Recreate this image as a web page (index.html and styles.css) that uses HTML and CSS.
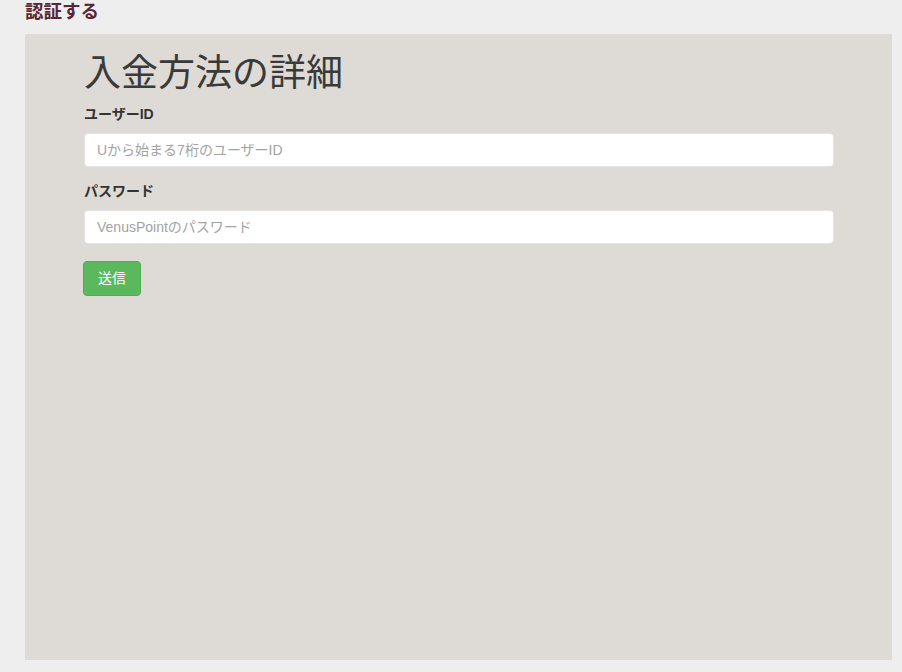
FILE: index.html
```html
<!DOCTYPE html>
<html lang="ja">
<head>
<meta charset="utf-8">
<title>認証する</title>
<link rel="stylesheet" href="styles.css">
</head>
<body>
<div class="page">
  <h2 class="page-title">認証する</h2>
  <div class="panel">
    <h1 class="heading">入金方法の詳細</h1>
    <form class="form">
      <div class="form-group">
        <label class="label" for="uid">ユーザーID</label>
        <input class="input" id="uid" type="text" placeholder="Uから始まる7桁のユーザーID">
      </div>
      <div class="form-group">
        <label class="label" for="pw">パスワード</label>
        <input class="input" id="pw" type="password" placeholder="VenusPointのパスワード">
      </div>
      <button class="btn" type="button">送信</button>
    </form>
  </div>
</div>
</body>
</html>
```

FILE: styles.css
```css
html, body {
  margin: 0;
  padding: 0;
  background: #eeeeee;
  font-family: "Liberation Sans", "Noto Sans CJK JP", sans-serif;
  color: #333333;
}

.page {
  padding: 0 10px 0 25px;
}

.page-title {
  margin: 0;
  font-size: 18.5px;
  line-height: 23px;
  font-weight: bold;
  color: #5a2636;
}

.panel {
  margin-top: 11px;
  height: 626px;
  box-sizing: border-box;
  background: #dedad5;
  padding: 20px 58px 0 59px;
}

.heading {
  margin: 0 0 10px 0;
  font-size: 37px;
  line-height: 40px;
  font-weight: normal;
  color: #3a3a3a;
}

.form {
  margin: 0;
}

.form-group {
  margin-bottom: 14px;
}

.label {
  display: block;
  font-size: 14px;
  line-height: 20px;
  font-weight: bold;
  margin-bottom: 9px;
  color: #333333;
}

.input {
  display: block;
  width: 100%;
  box-sizing: border-box;
  height: 34px;
  padding: 6px 12px;
  font-size: 14px;
  font-family: inherit;
  color: #555555;
  background: #ffffff;
  border: 1px solid #e6e4e1;
  border-radius: 4px;
  outline: none;
}

.input::placeholder {
  color: #a3a3a3;
}

.btn {
  margin-top: 3px;
  display: inline-block;
  height: 35px;
  padding: 6px 14px;
  font-size: 14px;
  line-height: 21px;
  font-family: inherit;
  color: #ffffff;
  background: #5cb85c;
  border: 1px solid #4cae4c;
  border-radius: 4px;
  margin-left: -1px;
}
```
